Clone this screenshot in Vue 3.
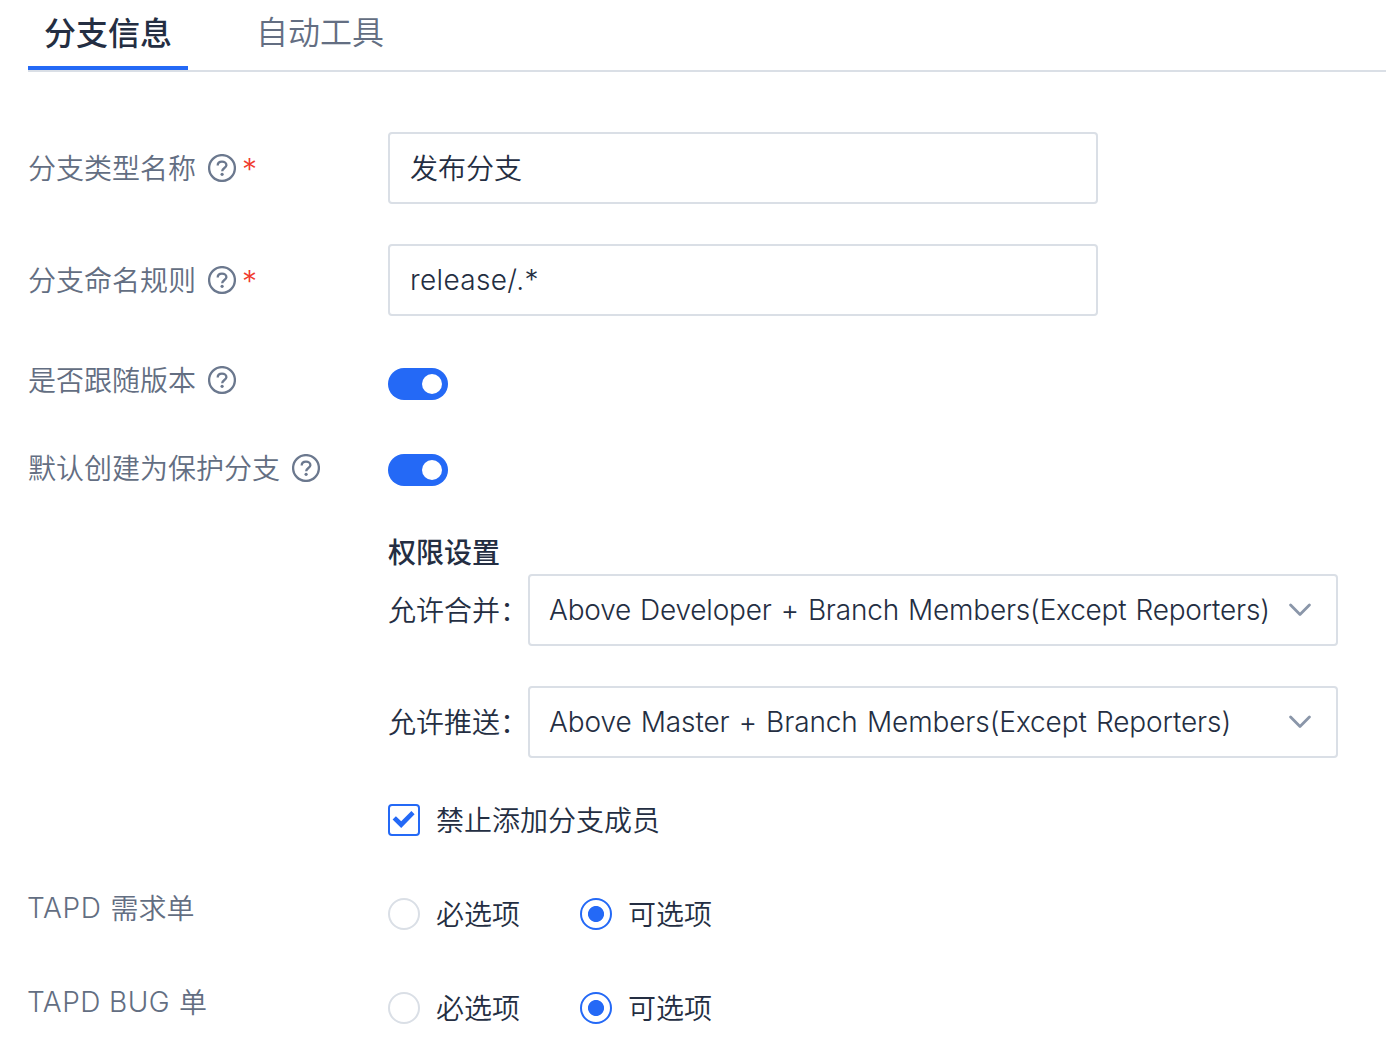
<script setup>
import { ref } from 'vue'

const tabs = ['分支信息', '自动工具']
const activeTab = ref(0)

const textFields = [
  { label: '分支类型名称', value: '发布分支', latin: false },
  { label: '分支命名规则', value: 'release/.*', latin: true },
]
const switches = ref([
  { label: '是否跟随版本', on: true, kind: 'follow' },
  { label: '默认创建为保护分支', on: true, kind: 'protect' },
])
const selects = [
  { label: '允许合并：', value: 'Above Developer + Branch Members(Except Reporters)', kind: 'merge' },
  { label: '允许推送：', value: 'Above Master + Branch Members(Except Reporters)', kind: 'push' },
]
const forbidMembers = ref(true)
const options = ['必选项', '可选项']
const choices = ref([
  { latin: 'TAPD', kind: 'story', cjk: '需求单', value: '可选项' },
  { latin: 'TAPD BUG', kind: 'bug', cjk: '单', value: '可选项' },
])
</script>

<template>
  <main class="page">
    <nav class="tabs">
      <a
        v-for="(tab, i) in tabs"
        :key="tab"
        class="tab"
        :class="{ active: i === activeTab }"
        @click="activeTab = i"
      >{{ tab }}</a>
    </nav>

    <section class="form">
      <div v-for="f in textFields" :key="f.label" class="row field-row">
        <div class="label">
          <span class="text">{{ f.label }}</span>
          <svg class="help" viewBox="0 0 28 28" fill="none">
            <circle cx="14" cy="14" r="12.9" />
            <path d="M9.7 11.5C9.7 9 11.5 7.7 14 7.7S18.4 9.2 18.4 11.3C18.4 14 14.2 14.1 14.2 17.2" />
            <circle class="dot" cx="14.1" cy="20.3" r="1.6" />
          </svg>
          <span class="required">*</span>
        </div>
        <div class="input"><span :class="f.latin ? 'path' : 'text'">{{ f.value }}</span></div>
      </div>

      <div v-for="s in switches" :key="s.label" class="row switch-row" :class="s.kind">
        <div class="label">
          <span class="text">{{ s.label }}</span>
          <svg class="help" viewBox="0 0 28 28" fill="none">
            <circle cx="14" cy="14" r="12.9" />
            <path d="M9.7 11.5C9.7 9 11.5 7.7 14 7.7S18.4 9.2 18.4 11.3C18.4 14 14.2 14.1 14.2 17.2" />
            <circle class="dot" cx="14.1" cy="20.3" r="1.6" />
          </svg>
        </div>
        <div class="switch" :class="{ on: s.on }" @click="s.on = !s.on"><i class="knob"></i></div>
      </div>

      <div class="permissions">
        <h2 class="heading">权限设置</h2>
        <div v-for="s in selects" :key="s.label" class="select-row">
          <span class="select-label text">{{ s.label }}</span>
          <div class="select">
            <span :class="s.kind">{{ s.value }}</span>
            <svg class="chevron" viewBox="0 0 22 14" fill="none"><path d="M1.6 2L11 11.4L20.4 2" /></svg>
          </div>
        </div>
        <div class="check-row" @click="forbidMembers = !forbidMembers">
          <span class="checkbox">
            <svg v-if="forbidMembers" viewBox="0 0 28 28"><path d="M2.6 13.4L5.9 10.2L11.2 15.3L21.4 5L24.6 8.2L11.2 22Z" /></svg>
          </span>
          <span class="text">禁止添加分支成员</span>
        </div>
      </div>

      <div v-for="c in choices" :key="c.latin" class="row choice-row">
        <div class="label choice-label">
          <span class="caps" :class="c.kind">{{ c.latin }}</span><span class="text">{{ c.cjk }}</span>
        </div>
        <div class="radios">
          <span v-for="o in options" :key="o" class="radio" @click="c.value = o">
            <i class="ring" :class="{ checked: c.value === o }"></i><span class="text">{{ o }}</span>
          </span>
        </div>
      </div>
    </section>
  </main>
</template>

<style>
body {
  margin: 0;
  background: #fff;
}
</style>

<style scoped>
.page {
  box-sizing: border-box;
  height: 1050px;
  padding-left: 28px;
  overflow: hidden;
  font-family: Inter, "Noto Sans CJK SC", sans-serif;
  font-size: 28px;
  font-weight: 330;
  line-height: 40px;
  color: #242e42;
  white-space: nowrap;
}
.text {
  padding-top: 2px;
  font-weight: 350;
}
.tabs {
  display: flex;
  gap: 52px;
  height: 70px;
  border-bottom: 2px solid #dadfe6;
}
.tab {
  box-sizing: border-box;
  width: 160px;
  height: 70px;
  border-bottom: 4px solid transparent;
  font-size: 32px;
  font-weight: 350;
  line-height: 66px;
  text-align: center;
  color: #636e82;
}
.tab.active {
  border-color: #2469f6;
  font-weight: 500;
  line-height: 68px;
  color: #242e42;
}
.form {
  padding-top: 60px;
}
.row {
  display: grid;
  grid-template-columns: 360px 1fr;
}
.label {
  display: flex;
  align-items: center;
  color: #636e82;
}
.field-row {
  height: 72px;
  margin-bottom: 40px;
}
.help {
  width: 28px;
  height: 28px;
  margin-left: 12px;
  stroke: #6b788e;
  stroke-width: 2.3;
}
.help .dot {
  fill: #6b788e;
  stroke: none;
}
.required {
  margin-left: 6px;
  padding-top: 2px;
  font-size: 30px;
  color: #f03a2e;
}
.input,
.select {
  box-sizing: border-box;
  display: flex;
  align-items: center;
  height: 72px;
  padding: 0 20px;
  border: 2px solid #dadfe6;
  border-radius: 4px;
}
.input {
  width: 710px;
}
.path {
  letter-spacing: 0.35px;
}
.switch-row {
  align-items: start;
  height: 40px;
}
.switch-row .label {
  height: 40px;
}
.switch-row.follow {
  margin-top: 44px;
}
.switch-row.protect {
  margin-top: 48px;
}
.switch {
  box-sizing: border-box;
  display: flex;
  width: 60px;
  height: 32px;
  margin-top: 6px;
  padding: 6px;
  border-radius: 16px;
  background: #b8c0cc;
}
.follow .switch {
  margin-top: 8px;
}
.switch.on {
  justify-content: flex-end;
  background: #2469f6;
}
.knob {
  width: 20px;
  height: 20px;
  border-radius: 50%;
  background: #fff;
}
.permissions {
  margin: 44px 0 0 360px;
}
.heading {
  margin: 0;
  font-size: 28px;
  font-weight: 500;
  line-height: 42px;
}
.select-row {
  display: flex;
  align-items: center;
  margin-bottom: 40px;
}
.select-label {
  width: 140px;
}
.select {
  justify-content: space-between;
  width: 810px;
  padding: 0 25px 0 19px;
}
.merge {
  letter-spacing: -0.2px;
  word-spacing: 1.4px;
}
.push {
  letter-spacing: -0.1px;
  word-spacing: 1.4px;
}
.chevron {
  width: 22px;
  height: 14px;
  stroke: #8a96a9;
  stroke-width: 2.8;
  stroke-linecap: round;
  stroke-linejoin: round;
}
.check-row {
  display: flex;
  align-items: center;
  gap: 16px;
  height: 40px;
  padding-top: 2px;
}
.checkbox {
  box-sizing: border-box;
  display: flex;
  width: 32px;
  height: 32px;
  border: 2px solid #2469f6;
  border-radius: 4px;
}
.checkbox svg {
  width: 28px;
  height: 28px;
  fill: #2469f6;
}
.choice-row {
  height: 46px;
  margin-top: 48px;
}
.choice-label {
  height: 40px;
  gap: 9px;
}
.caps {
  margin-left: -1px;
}
.story {
  letter-spacing: 0.6px;
}
.bug {
  letter-spacing: 0.45px;
}
.radios {
  display: flex;
  gap: 60px;
  height: 40px;
  padding-top: 6px;
}
.radio {
  display: flex;
  align-items: center;
  gap: 16px;
}
.ring {
  box-sizing: border-box;
  width: 32px;
  height: 32px;
  border: 2px solid #dadfe6;
  border-radius: 50%;
}
.ring.checked {
  border-color: #2469f6;
  background: radial-gradient(circle, #2469f6 7.6px, #fff 8.4px);
}
</style>
